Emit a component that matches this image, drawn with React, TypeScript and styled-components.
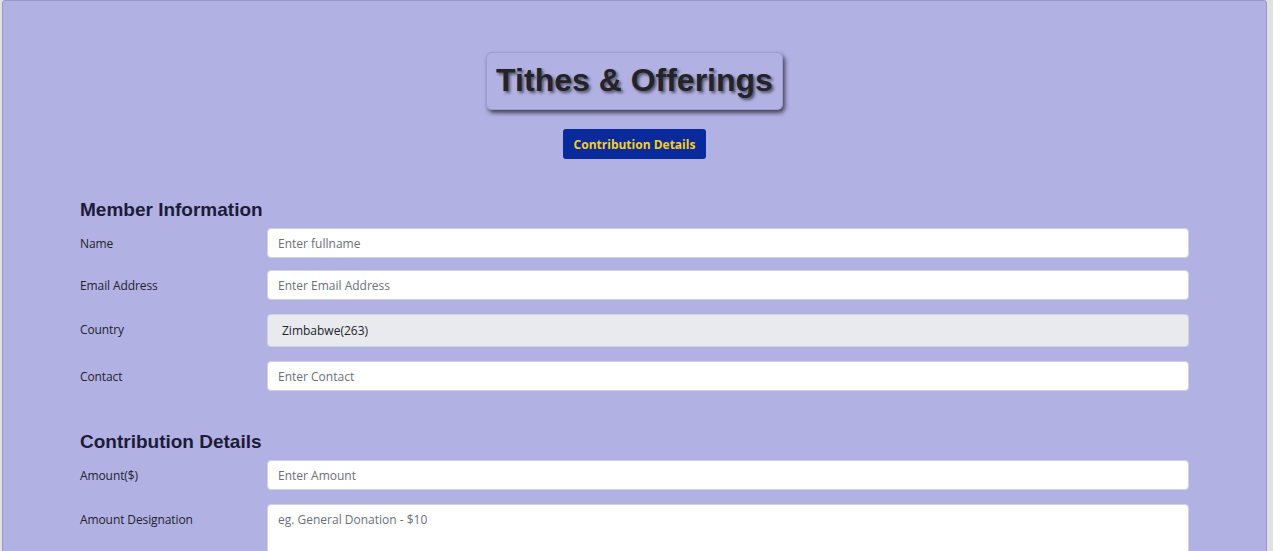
import React from "react";
import styled, { createGlobalStyle } from "styled-components";

const Global = createGlobalStyle`
  html, body { margin: 0; padding: 0; background: #e1e1e1; }
  body { padding: 0 6px 0 2px; font-family: "Open Sans", "Noto Sans", sans-serif; }
  * { box-sizing: border-box; }
`;

const Card = styled.div`
  background: #b2b1e3;
  border: 1px solid #9897ca;
  border-radius: 3px;
  min-height: 560px;
  padding: 51px 77px 0;
`;

const Header = styled.div`
  display: flex;
  flex-direction: column;
  align-items: center;
`;

const TitleBox = styled.div`
  border: 1px solid #9d9cd0;
  border-radius: 6px;
  box-shadow: 2px 3px 4px rgba(30, 30, 40, 0.75);
  padding: 9px 9px 10px;
`;

const Title = styled.h1`
  margin: 0;
  font-family: "Liberation Sans", Arial, sans-serif;
  font-weight: 700;
  font-size: 32px;
  line-height: 37px;
  color: #23232b;
  text-shadow: 2px 2px 3px rgba(0, 0, 0, 0.55);
`;

const TabButton = styled.button`
  margin-top: 19px;
  width: 143px;
  height: 30px;
  border: none;
  border-radius: 3px;
  background: #082a9b;
  color: #fbcf19;
  font-family: "Open Sans", "Noto Sans", sans-serif;
  font-weight: 700;
  font-size: 12px;
  padding: 0;
`;

const Section = styled.section<{ $gap: number }>`
  margin-top: ${(p) => p.$gap}px;
`;

const SectionTitle = styled.h2`
  margin: 0 0 7px;
  font-family: "Liberation Sans", Arial, sans-serif;
  font-weight: 700;
  font-size: 19px;
  line-height: 22px;
  color: #1c1b38;
`;

const Row = styled.div<{ $mb?: number }>`
  display: grid;
  grid-template-columns: 187px 1fr;
  margin-bottom: ${(p) => p.$mb ?? 14}px;
  align-items: start;
`;

const Label = styled.label`
  padding-top: 7px;
  font-size: 12px;
  line-height: 17px;
  color: #23232e;
  letter-spacing: -0.1px;
`;

const Input = styled.input`
  width: 100%;
  height: 30px;
  border: 1px solid #cfd3de;
  border-radius: 4px;
  background: #fff;
  padding: 0 10px;
  font-family: "Open Sans", "Noto Sans", sans-serif;
  font-size: 12px;
  color: #212529;
  outline: none;
  &::placeholder { color: #6c6f7a; }
`;

const Static = styled.div`
  width: 100%;
  height: 33px;
  border: 1px solid #cfd3de;
  border-radius: 4px;
  background: #e8eaee;
  padding: 0 14px;
  display: flex;
  align-items: center;
  font-size: 12px;
  color: #212529;
`;

const TextArea = styled.textarea`
  width: 100%;
  height: 80px;
  border: 1px solid #cfd3de;
  border-radius: 4px;
  background: #fff;
  padding: 6px 10px;
  font-family: "Open Sans", "Noto Sans", sans-serif;
  font-size: 12px;
  resize: none;
  outline: none;
  &::placeholder { color: #6c6f7a; }
`;

export default function App() {
  return (
    <>
      <Global />
      <Card>
        <Header>
          <TitleBox>
            <Title>Tithes &amp; Offerings</Title>
          </TitleBox>
          <TabButton>Contribution Details</TabButton>
        </Header>

        <Section $gap={40}>
          <SectionTitle>Member Information</SectionTitle>
          <Row $mb={12}>
            <Label>Name</Label>
            <Input placeholder="Enter fullname" />
          </Row>
          <Row>
            <Label>Email Address</Label>
            <Input placeholder="Enter Email Address" />
          </Row>
          <Row>
            <Label>Country</Label>
            <Static>Zimbabwe(263)</Static>
          </Row>
          <Row>
            <Label>Contact</Label>
            <Input placeholder="Enter Contact" />
          </Row>
        </Section>

        <Section $gap={40}>
          <SectionTitle>Contribution Details</SectionTitle>
          <Row>
            <Label>Amount($)</Label>
            <Input placeholder="Enter Amount" />
          </Row>
          <Row>
            <Label>Amount Designation</Label>
            <TextArea placeholder="eg. General Donation - $10" />
          </Row>
        </Section>
      </Card>
    </>
  );
}
